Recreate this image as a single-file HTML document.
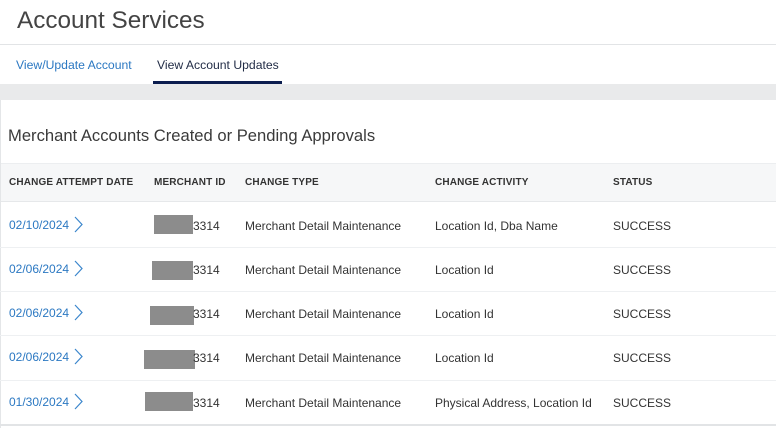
<!DOCTYPE html>
<html><head><meta charset="utf-8"><style>
*{margin:0;padding:0;box-sizing:border-box}
body{width:776px;height:428px;background:#fff;font-family:"Liberation Sans",Arial,sans-serif;position:relative;overflow:hidden;color:#333}
.a{position:absolute;white-space:nowrap}
.t{font-size:24.3px;color:#444;left:17px;top:7px}
.line{position:absolute;left:0;width:776px;height:1px;background:#e2e4e6}
.tab{font-size:12.2px;top:58px}
.hdr{font-size:10px;font-weight:bold;color:#333;top:177px;letter-spacing:0.15px}
.cell{font-size:12px;color:#333}
.date{font-size:12px;color:#2b78c2}
.red{position:absolute;background:#8c8c8c;height:19px}
</style></head><body>
<div class="a t">Account Services</div>
<div class="line" style="top:44px"></div>
<div class="a tab" style="left:16px;color:#2b78c2">View/Update Account</div>
<div class="a tab" style="left:157px;color:#1f2a44">View Account Updates</div>
<div style="position:absolute;left:153px;top:81px;width:129px;height:3px;background:#0b1d4f"></div>
<div style="position:absolute;left:0;top:84px;width:776px;height:16px;background:#e9eaeb"></div>
<div style="position:absolute;left:0;top:100px;width:1px;height:328px;background:#e4e6e8"></div>
<div class="a" style="left:8px;top:126px;font-size:16.6px;color:#3a3a3a">Merchant Accounts Created or Pending Approvals</div>
<div style="position:absolute;left:1px;top:163px;width:775px;height:39px;background:#f6f7f8;border-top:1px solid #eceef0;border-bottom:1px solid #e6e8ea"></div>
<div class="a hdr" style="left:9px">CHANGE ATTEMPT DATE</div>
<div class="a hdr" style="left:154px">MERCHANT ID</div>
<div class="a hdr" style="left:245px">CHANGE TYPE</div>
<div class="a hdr" style="left:435px">CHANGE ACTIVITY</div>
<div class="a hdr" style="left:613px">STATUS</div>

<div class="line" style="top:247px;background:#eef0f2"></div>
<div class="line" style="top:291px;background:#eef0f2"></div>
<div class="line" style="top:335px;background:#eef0f2"></div>
<div class="line" style="top:380px;background:#eef0f2"></div>
<div class="line" style="top:424px;height:2px;background:#e2e4e6"></div>

<div class="a date" style="left:9px;top:218px">02/10/2024</div>
<div class="a date" style="left:9px;top:262px">02/06/2024</div>
<div class="a date" style="left:9px;top:306px">02/06/2024</div>
<div class="a date" style="left:9px;top:350px">02/06/2024</div>
<div class="a date" style="left:9px;top:395px">01/30/2024</div>
<svg style="position:absolute;left:0;top:0" width="776" height="428">
<g fill="none" stroke="#3b86cc" stroke-width="1.2">
<path d="M75 217 L82 224.5 L75 232"/>
<path d="M75 261 L82 268.5 L75 276"/>
<path d="M75 305 L82 312.5 L75 320"/>
<path d="M75 349 L82 356.5 L75 364"/>
<path d="M75 394 L82 401.5 L75 409"/>
</g></svg>

<div class="red" style="left:154px;top:215px;width:39px"></div>
<div class="red" style="left:152px;top:261px;width:41px"></div>
<div class="red" style="left:150px;top:306px;width:44px"></div>
<div class="red" style="left:144px;top:350px;width:51px"></div>
<div class="red" style="left:145px;top:392px;width:48px"></div>
<div class="a cell" style="left:193px;top:219px">3314</div>
<div class="a cell" style="left:193px;top:263px">3314</div>
<div class="a cell" style="left:193px;top:307px">3314</div>
<div class="a cell" style="left:193px;top:351px">3314</div>
<div class="a cell" style="left:193px;top:396px">3314</div>

<div class="a cell" style="left:245px;top:219px">Merchant Detail Maintenance</div>
<div class="a cell" style="left:245px;top:263px">Merchant Detail Maintenance</div>
<div class="a cell" style="left:245px;top:307px">Merchant Detail Maintenance</div>
<div class="a cell" style="left:245px;top:351px">Merchant Detail Maintenance</div>
<div class="a cell" style="left:245px;top:396px">Merchant Detail Maintenance</div>

<div class="a cell" style="left:435px;top:219px">Location Id, Dba Name</div>
<div class="a cell" style="left:435px;top:263px">Location Id</div>
<div class="a cell" style="left:435px;top:307px">Location Id</div>
<div class="a cell" style="left:435px;top:351px">Location Id</div>
<div class="a cell" style="left:435px;top:396px">Physical Address, Location Id</div>

<div class="a cell" style="left:613px;top:219px">SUCCESS</div>
<div class="a cell" style="left:613px;top:263px">SUCCESS</div>
<div class="a cell" style="left:613px;top:307px">SUCCESS</div>
<div class="a cell" style="left:613px;top:351px">SUCCESS</div>
<div class="a cell" style="left:613px;top:396px">SUCCESS</div>
</body></html>
